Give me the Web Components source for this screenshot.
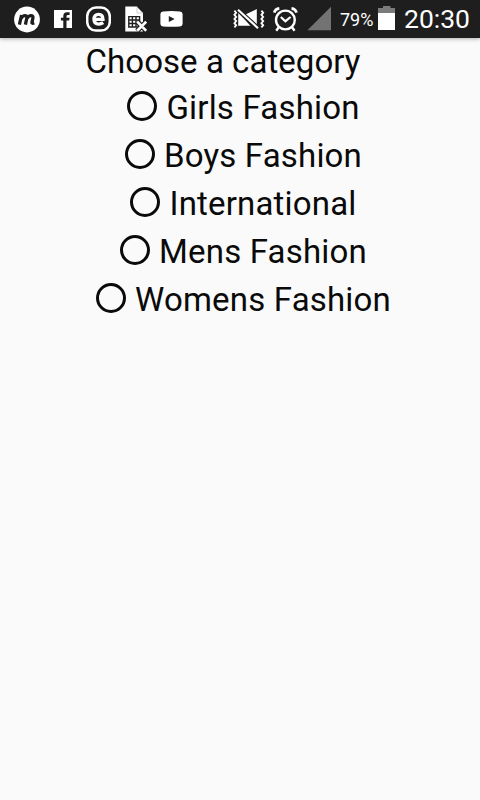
<!DOCTYPE html>
<html lang="en">
<head>
<meta charset="utf-8">
<meta name="viewport" content="width=device-width, initial-scale=1">
<title>Choose a category</title>
<style>
    body {
        margin: 0;
        background: #fafafa;
        color: #0a0a0a;
        font-family: Roboto, "Liberation Sans", sans-serif;
    }
</style>
</head>
<body>
<category-screen></category-screen>

<script>
// Every glyph is as tall as the bar, so only the width differs
const ICONS = {
    messenger: [26, `
        <circle cx="13" cy="19.5" r="12.9" fill="#fff"/>
        <path d="M5.4 24.6 L7.6 15 M6.7 18.8 Q9 15.3 11.3 15.7 Q13.4 16 12.7 18.6 L11.4 24.6 M12.6 18.8 Q15 15.3 17.4 15.7 Q19.5 16 18.8 18.6 L17.9 22.4 Q17.6 23.8 20.3 23" fill="none" stroke="#1e1e1e" stroke-width="3.3" stroke-linejoin="round"/>`],
    facebook: [18, `
        <path d="M0 10h18v18H0z" fill="#fff"/>
        <path d="M9.3 28V20.6H6.9V17.8H9.3V16Q9.3 12.2 13 12.2H15.6V15.1H13.9Q12.5 15.1 12.5 16.5V17.8H15.6L15.2 20.6H12.5V28z" fill="#1e1e1e"/>`],
    browser: [25, `
        <rect x="1.2" y="7.6" width="22.6" height="23" rx="8.8" fill="none" stroke="#fff" stroke-width="2.5"/>
        <path d="M7.6 19.4H17Q17 14.4 12.6 14.4Q8 14.4 8 19.3Q8 24.1 12.8 24.1Q15.2 24.1 17.2 22.7" fill="none" stroke="#fff" stroke-width="3.3"/>`],
    sim: [22, `
        <path d="M.3 6.5H11.7L18 13V31.5H.3z" fill="#fff"/>
        <path d="M12 6.5V13H18" fill="none" stroke="#bbb" stroke-width=".7"/>
        <path d="M3.8 16.6H14.6V27H3.8z M3.8 20H14.6 M3.8 23.5H14.6 M7.4 16.6V27 M11 16.6V27" fill="none" stroke="#1e1e1e" stroke-width="1.4"/>
        <path d="M12 21.4L21.4 31 M21.4 21.4L12 31" stroke="#1e1e1e" stroke-width="5"/>
        <path d="M12.2 21.6L21.2 30.8 M21.2 21.6L12.2 30.8" stroke="#fff" stroke-width="2.7"/>`],
    video: [23, `
        <path d="M3 11.4Q11.5 10.6 20 11.4Q22.5 11.6 22.6 14V24Q22.5 26.2 20 26.4Q11.5 27.2 3 26.4Q.5 26.2 .4 24V14Q.5 11.6 3 11.4z" fill="#fff"/>
        <path d="M8.8 15.9V22L14.6 19z" fill="#1e1e1e"/>`],
    vibrate: [32, `
        <path d="M1.4 10.6l1.8 2.1-1.8 2.1 1.8 2.1-1.8 2.1 1.8 2.1-1.8 2.1 1.8 2.1-1.8 2.1 M28.4 10.6l1.8 2.1-1.8 2.1 1.8 2.1-1.8 2.1 1.8 2.1-1.8 2.1 1.8 2.1-1.8 2.1" fill="none" stroke="#fff" stroke-width="1.8"/>
        <path d="M5.2 12.6L17.4 25.8H5.2z M12.4 14.6L23.8 9V25z" fill="#fff"/>
        <path d="M5 9.8L25 28.2" stroke="#1e1e1e" stroke-width="4.4"/>
        <path d="M5 9.8L25 28.2" stroke="#fff" stroke-width="2.2"/>`],
    alarm: [25, `
        <circle cx="12.4" cy="20" r="9.4" fill="none" stroke="#fff" stroke-width="2.4"/>
        <path d="M1.2 12.6Q2.2 9 6.3 8.4 M23.6 12.6Q22.6 9 18.5 8.4" fill="none" stroke="#fff" stroke-width="2.6"/>
        <path d="M7.8 17L12.4 21.2L17.6 17" fill="none" stroke="#fff" stroke-width="2.2"/>
        <path d="M6 27L3.2 30.8 M18.8 27L21.6 30.8" stroke="#fff" stroke-width="2.4"/>`],
    signal: [24, `<path d="M24 6.8V30.2H.4z" fill="#737373"/>`],
    battery: [17, `
        <path d="M0 13V8H5V6H12.5V8H17V13z" fill="#7b7b7b"/>
        <path d="M0 13H17V30H0z" fill="#fff"/>`]
};

class StatusIcon extends HTMLElement {
    constructor() {
        super();
        this.attachShadow({ mode: 'open' });
    }

    connectedCallback() {
        const [width, shapes] = ICONS[this.getAttribute('name')];
        this.shadowRoot.innerHTML = `
        <style>
        :host { display: block; flex: none; }
        svg { display: block; }
        </style>
        <svg width="${width}" height="38" viewBox="0 0 ${width} 38" aria-hidden="true">${shapes}</svg>`;
    }
}

class StatusBar extends HTMLElement {
    constructor() {
        super();
        this.attachShadow({ mode: 'open' });
        this.shadowRoot.innerHTML = `
        <style>
        :host {
            display: flex;
            justify-content: space-between;
            box-sizing: border-box;
            height: 38px;
            padding: 0 10px 0 14px;
            background: #1e1e1e;
            color: #fff;
            box-shadow: 0 1px 4px rgba(0, 0, 0, .3);
        }
        .group { display: flex; align-items: center; }
        .notifications { gap: 14px; }
        .video { margin-left: -1px; }
        .alarm { margin-left: 8px; }
        .signal { margin-left: 9px; }
        .percent { width: 38px; margin-left: 9px; font-size: 18px; line-height: 38px; padding-top: 1px; white-space: nowrap; }
        .clock { margin-left: 9px; font-size: 26.5px; line-height: 38px; }
        </style>
        <div class="group notifications">
            <status-icon name="messenger"></status-icon>
            <status-icon name="facebook"></status-icon>
            <status-icon name="browser"></status-icon>
            <status-icon name="sim"></status-icon>
            <status-icon class="video" name="video"></status-icon>
        </div>
        <div class="group">
            <status-icon name="vibrate"></status-icon>
            <status-icon class="alarm" name="alarm"></status-icon>
            <status-icon class="signal" name="signal"></status-icon>
            <span class="percent">79%</span>
            <status-icon name="battery"></status-icon>
            <span class="clock">20:30</span>
        </div>`;
    }
}

class RadioOption extends HTMLElement {
    constructor() {
        super();
        this.attachShadow({ mode: 'open' });
        this.shadowRoot.innerHTML = `
        <style>
        :host {
            display: flex;
            align-items: center;
            gap: 9px;
            height: 48px;
            font-size: 33px;
            letter-spacing: .18px;
            line-height: 48px;
            white-space: nowrap;
        }
        .ring {
            box-sizing: border-box;
            width: 30px;
            height: 30px;
            border: 3px solid #0a0a0a;
            border-radius: 50%;
        }
        .label { padding-top: 3px; }
        </style>
        <span class="ring"></span>
        <span class="label"><slot></slot></span>`;
    }
}

class CategoryScreen extends HTMLElement {
    constructor() {
        super();
        this.attachShadow({ mode: 'open' });
        this.shadowRoot.innerHTML = `
        <style>
        :host { display: block; min-height: 100vh; }
        h1 {
            margin: 0;
            padding: 4px 34px 0 0;
            font-size: 33px;
            font-weight: 400;
            letter-spacing: .05px;
            line-height: 40px;
            text-align: center;
        }
        .options {
            display: flex;
            flex-direction: column;
            align-items: center;
            padding-left: 7px;
        }
        </style>
        <status-bar></status-bar>
        <h1>Choose a category</h1>
        <div class="options" role="radiogroup">
            <radio-option role="radio">Girls Fashion</radio-option>
            <radio-option role="radio">Boys Fashion</radio-option>
            <radio-option role="radio">International</radio-option>
            <radio-option role="radio">Mens Fashion</radio-option>
            <radio-option role="radio">Womens Fashion</radio-option>
        </div>`;
    }
}

customElements.define('status-icon', StatusIcon);
customElements.define('status-bar', StatusBar);
customElements.define('radio-option', RadioOption);
customElements.define('category-screen', CategoryScreen);
</script>
</body>
</html>
